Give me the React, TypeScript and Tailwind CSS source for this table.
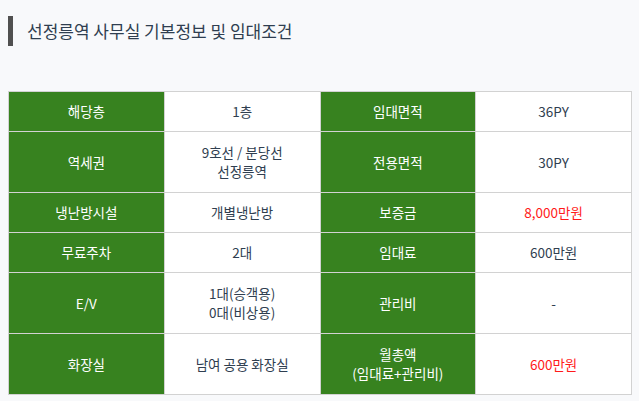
const rows: [string[], string, string[], string, string?][] = [
  [["1층"], "해당층", ["36PY"], "임대면적"],
  [["9호선 / 분당선", "선정릉역"], "역세권", ["30PY"], "전용면적"],
  [["개별냉난방"], "냉난방시설", ["8,000만원"], "보증금", "red"],
  [["2대"], "무료주차", ["600만원"], "임대료"],
  [["1대(승객용)", "0대(비상용)"], "E/V", ["-"], "관리비"],
  [["남여 공용 화장실"], "화장실", ["600만원"], "월총액\n(임대료+관리비)", "red"],
];

export default function App() {
  return (
    <div
      className="min-h-screen bg-[#f8f9fb] px-2 pt-4"
      style={{ fontFamily: '"Noto Sans CJK KR", "Noto Sans", sans-serif' }}
    >
      {/* Title */}
      <div className="flex h-[30px] items-center border-l-[5px] border-[#505050] pl-[14px]">
        <h2 className="text-[17px] text-[#2f3e50]">선정릉역 사무실 기본정보 및 임대조건</h2>
      </div>

      {/* Info table */}
      <table className="mt-[45px] w-[624px] table-fixed border-collapse text-[13.5px]">
        <tbody>
          {rows.map(([value, label, value2, label2, tone], i) => {
            const tall = value.length > 1 || label2.includes("\n");
            return (
              <tr key={i} className={tall ? "h-[61px]" : "h-[40px]"}>
                <th className="border border-[#d2d2d2] bg-[#37821f] font-normal text-white">{label}</th>
                <td className="border border-[#d2d2d2] bg-white text-center leading-[19px] text-[#2f3e50]">
                  {value.map((v) => (
                    <div key={v}>{v}</div>
                  ))}
                </td>
                <th className="whitespace-pre-line border border-[#d2d2d2] bg-[#37821f] font-normal leading-[19px] text-white">
                  {label2}
                </th>
                <td
                  className={
                    "border border-[#d2d2d2] bg-white text-center " +
                    (tone === "red" ? "text-[#ff1a1a]" : "text-[#2f3e50]")
                  }
                >
                  {value2}
                </td>
              </tr>
            );
          })}
        </tbody>
      </table>
    </div>
  );
}
